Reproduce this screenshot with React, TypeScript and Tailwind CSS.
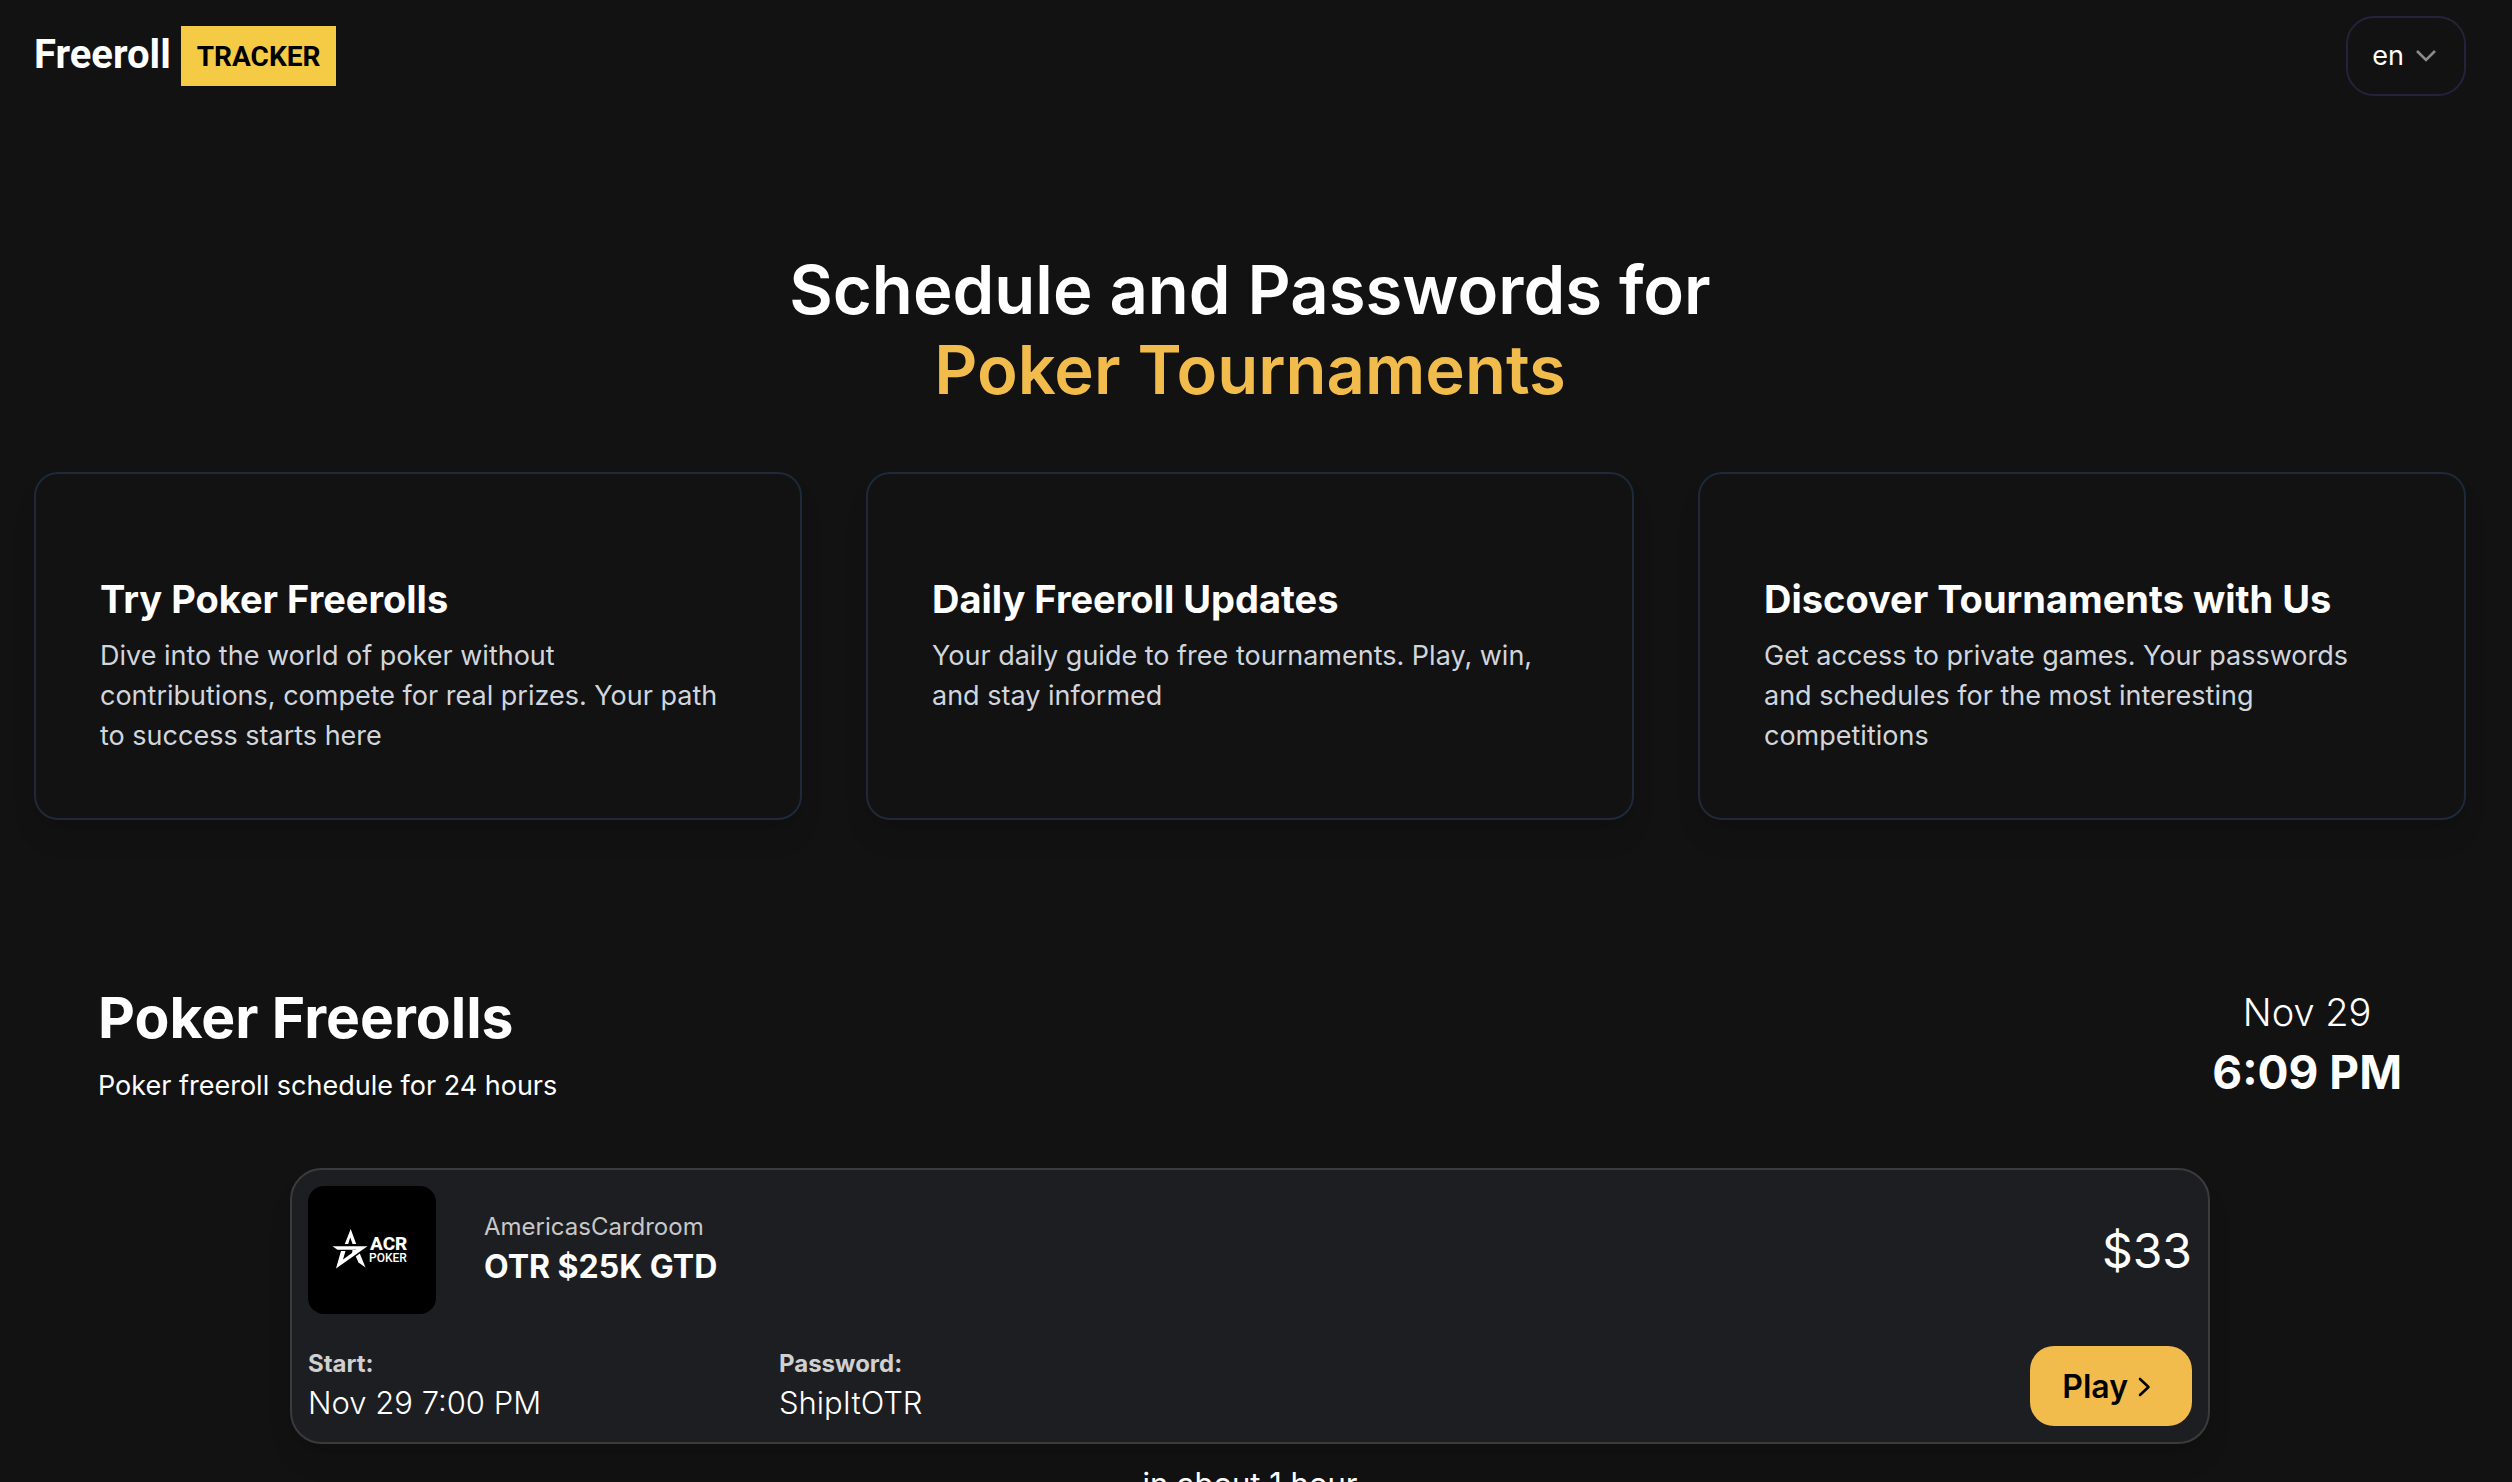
import React from "react";

const features = [
  {
    title: "Try Poker Freerolls",
    text: "Dive into the world of poker without contributions, compete for real prizes. Your path to success starts here",
  },
  {
    title: "Daily Freeroll Updates",
    text: "Your daily guide to free tournaments. Play, win, and stay informed",
  },
  {
    title: "Discover Tournaments with Us",
    text: "Get access to private games. Your passwords and schedules for the most interesting competitions",
  },
];

function Header() {
  return (
    <header className="flex items-center justify-between pt-4">
      <a href="#" className="flex items-center gap-2.5 font-['Roboto',sans-serif] font-bold">
        <span className="pb-0.5 text-[40px] leading-[56px]">Freeroll</span>
        <span className="bg-[#f5ca45] px-4 pt-[11px] pb-[9px] text-[28px] leading-10 text-black">TRACKER</span>
      </a>
      <button
        type="button"
        className="flex h-20 items-center gap-3 rounded-[28px] border-2 border-[#23233b] pr-7 pl-6 text-[27px] leading-10"
      >
        en
        <svg width="20" height="12" viewBox="0 0 20 12" fill="none" stroke="#8b8b8b" strokeWidth="2.6" aria-hidden="true">
          <path d="M1 1l9 9 9-9" />
        </svg>
      </button>
    </header>
  );
}

function FeatureCard({ title, text }: { title: string; text: string }) {
  return (
    <article className="rounded-3xl border-2 border-gray-800 px-16 pt-24 pb-[62px] shadow-[0_20px_30px_-6px_rgba(0,0,0,0.1),0_8px_12px_-8px_rgba(0,0,0,0.1)]">
      <h2 className="text-[38px] leading-[58px] font-bold">{title}</h2>
      <p className="mt-2 text-[27px] leading-10 text-gray-300">{text}</p>
    </article>
  );
}

function RoomLogo() {
  return (
    <svg
      className="size-32 rounded-2xl bg-black"
      viewBox="0 0 128 128"
      fill="#fff"
      role="img"
      aria-label="ACR Poker"
    >
      <path d="M42.700 43L48.200 58H44.600L42.200 51.500L40.200 58H36.800Z" />
      <path d="M24.500 60.200H59.500L28 82.500L33 65H37.500L35 73.500L48.500 63.800H29.500Z" />
      <path d="M44.500 64H52L43.500 70.500Z" />
      <path d="M47.800 70.500L51.800 67.500L57.500 81.500L50.500 76.500Z" />
      <text x="62" y="64" fontFamily="Roboto, sans-serif" fontWeight="800" fontSize="19">ACR</text>
      <text x="61" y="76" fontFamily="Roboto, sans-serif" fontWeight="500" fontSize="12">POKER</text>
    </svg>
  );
}

function TournamentCard() {
  return (
    <article className="mx-auto w-full max-w-[1920px] rounded-[32px] border-2 border-[#3b3b3b] bg-[#1d1e22] p-4 shadow-[0_20px_30px_-6px_rgba(0,0,0,0.1),0_8px_12px_-8px_rgba(0,0,0,0.1)]">
      <div className="flex items-center gap-12">
        <RoomLogo />
        <div className="flex-1 pt-0.5">
          <p className="text-2xl leading-8 text-[#c8c8c8]">AmericasCardroom</p>
          <h3 className="text-[32px] leading-[48px] font-bold">OTR $25K GTD</h3>
        </div>
        <p className="pt-0.5 text-5xl leading-[64px]">$33</p>
      </div>
      <div className="mt-8 grid grid-cols-4 items-end">
        <div>
          <p className="text-2xl leading-8 font-bold text-[#d0d0d0]">Start:</p>
          <p className="text-[31px] leading-[46px] font-light">Nov 29 7:00 PM</p>
        </div>
        <div>
          <p className="text-2xl leading-8 font-bold text-[#d0d0d0]">Password:</p>
          <p className="text-[31px] leading-[46px] font-light">ShipItOTR</p>
        </div>
        <button
          type="button"
          className="col-start-4 flex h-20 items-center gap-2.5 justify-self-end rounded-3xl bg-[#f2bc4c] pt-0.5 pr-10 pl-8 text-[32px] leading-[48px] font-semibold text-black"
        >
          Play
          <svg width="14" height="20" viewBox="0 0 14 20" fill="none" stroke="currentColor" strokeWidth="2.600" strokeLinecap="round" strokeLinejoin="round" aria-hidden="true">
            <path d="M2 2l8.500 8-8.500 8" />
          </svg>
        </button>
      </div>
    </article>
  );
}

export default function App() {
  return (
    <div className="h-screen overflow-hidden bg-[#121212] pr-3 font-['Inter',sans-serif] text-white">
      <div className="px-[34px]">
        <Header />
        <h1 className="mt-[154px] text-center text-[67px] leading-[80px] font-semibold">
          Schedule and Passwords for
          <span className="block text-[#f2bc4c]">Poker Tournaments</span>
        </h1>
        <section className="mt-[62px] grid grid-cols-3 gap-16">
          {features.map((f) => (
            <FeatureCard key={f.title} title={f.title} text={f.text} />
          ))}
        </section>
        <section className="mt-[162px] px-16">
          <div className="flex items-start justify-between">
            <div>
              <h2 className="text-[57px] leading-[72px] font-bold">Poker Freerolls</h2>
              <p className="mt-3 text-[27px] leading-10">Poker freeroll schedule for 24 hours</p>
            </div>
            <div className="text-center">
              <p className="text-[38px] leading-[60px] font-light">Nov 29</p>
              <p className="text-[46px] leading-[60px] font-bold">6:09 PM</p>
            </div>
          </div>
          <div className="mt-[62px]">
            <TournamentCard />
            <p className="mt-4 text-center text-[31px] leading-[48px]">in about 1 hour</p>
          </div>
        </section>
      </div>
    </div>
  );
}
